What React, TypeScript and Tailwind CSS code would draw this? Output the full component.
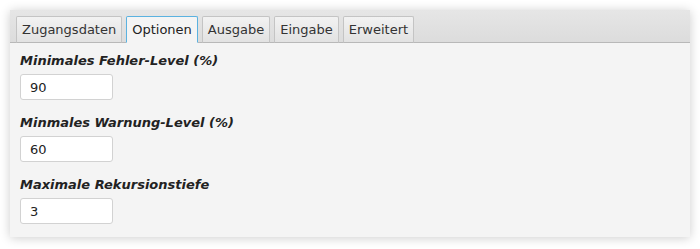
const tabs = ['Zugangsdaten', 'Optionen', 'Ausgabe', 'Eingabe', 'Erweitert'];

const fields = [
  { label: 'Minimales Fehler-Level (%)', value: '90' },
  { label: 'Minmales Warnung-Level (%)', value: '60' },
  { label: 'Maximale Rekursionstiefe', value: '3' },
];

export default function App() {
  return (
    <div className="h-[249px] w-[700px] bg-white p-[10px] font-['DejaVu_Sans',sans-serif]">
      <div className="h-[227px] bg-[#f4f4f4] shadow-[0_1px_10px_rgba(0,0,0,0.2)]">
        <div className="flex h-[33px] gap-[4px] border-b border-[#b8b8b8] bg-gradient-to-b from-[#e6e6e6] to-[#dcdcdc] pl-[6px] pt-[6px]">
          {tabs.map((t) => {
            const active = t === 'Optionen';
            return (
              <div
                key={t}
                className={`-mb-px flex h-[27px] items-center rounded-t-[2px] border px-[5px] text-[13px] leading-none ${
                  active
                    ? 'border-[#5bb2e0] border-b-[#f4f4f4] bg-[#f4f4f4] text-[#222]'
                    : 'border-[#c4c4c4] border-b-[#b8b8b8] bg-gradient-to-b from-[#f2f2f2] to-[#e2e2e2] text-[#333]'
                }`}
              >
                {t}
              </div>
            );
          })}
        </div>
        <div className="flex flex-col gap-[15px] px-[10px] pt-[10px]">
          {fields.map((f) => (
            <div key={f.label} className="flex flex-col gap-[5px]">
              <div className="text-[13px] font-bold italic leading-[16px] text-[#222]">{f.label}</div>
              <input
                readOnly
                value={f.value}
                className="h-[26px] w-[93px] rounded-[3px] border border-[#d2d2d2] bg-white px-[9px] text-[13px] text-[#222] outline-none"
              />
            </div>
          ))}
        </div>
      </div>
    </div>
  );
}
